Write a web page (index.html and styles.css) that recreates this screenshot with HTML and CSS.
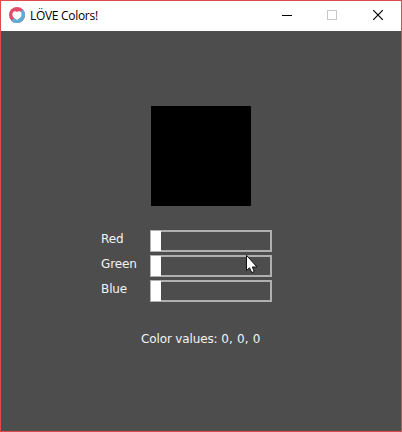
FILE: index.html
```html
<!DOCTYPE html>
<html lang="en">
<head>
<meta charset="utf-8">
<title>LÖVE Colors!</title>
<link rel="stylesheet" href="styles.css">
</head>
<body>
<div class="window">
  <header class="titlebar">
    <svg class="logo" width="16" height="16" viewBox="0 0 16 16">
      <circle cx="8" cy="8" r="8" fill="#e64a6b"/>
      <path d="M13.66 2.34A8 8 0 0 1 2.34 13.66Z" fill="#5cacd6"/>
      <path d="M8 13 4.4 10.2C2.8 8.4 3.2 4.2 5.8 4.2 6.9 4.2 7.6 4.5 8 5.2 8.4 4.5 9.1 4.2 10.2 4.2 12.8 4.2 13.2 8.4 11.6 10.2Z" fill="#fff"/>
    </svg>
    <span class="title">LÖVE Colors!</span>
    <div class="controls">
      <svg width="46" height="30" viewBox="0 0 46 30" shape-rendering="crispEdges"><path d="M18 14h10v1H18z" fill="#000"/></svg>
      <svg width="46" height="30" viewBox="0 0 46 30" shape-rendering="crispEdges"><rect x="17.5" y="9.5" width="9" height="9" fill="none" stroke="#c8c8c8"/></svg>
      <svg width="46" height="30" viewBox="0 0 46 30"><path d="M17.2 9.2 26.8 18.8M26.8 9.2 17.2 18.8" stroke="#000" stroke-width="1.2"/></svg>
    </div>
  </header>
  <main class="content">
    <div class="swatch"></div>
    <div class="sliders">
      <div class="row"><span class="label">Red</span><div class="track"><div class="handle"></div></div></div>
      <div class="row"><span class="label">Green</span><div class="track"><div class="handle"></div></div></div>
      <div class="row"><span class="label">Blue</span><div class="track"><div class="handle"></div></div></div>
    </div>
    <p class="values">Color values: <span class="numbers">0, 0, 0</span></p>
  </main>
  <svg class="cursor" width="13" height="20" viewBox="0 0 13 20">
    <path d="M1.5 1.3V16.5L4.5 13.8 6.8 18.6 9.3 17.5 7.3 13H12Z" fill="#fff" stroke="#111"/>
  </svg>
</div>
</body>
</html>
```

FILE: styles.css
```css
* {
  box-sizing: border-box;
}

body {
  margin: 0;
}

.window {
  position: relative;
  width: 402px;
  height: 432px;
  border: 1px solid #e04a4a;
  background: #4d4d4d;
  overflow: hidden;
}

.titlebar {
  display: flex;
  align-items: center;
  height: 30px;
  padding-left: 8px;
  background: #fff;
}

.logo {
  margin-top: -2px;
}

.title {
  margin-left: 5px;
  font: 12px/28px "Open Sans", "Noto Sans", sans-serif;
  letter-spacing: -0.3px;
  color: #000;
  white-space: nowrap;
}

.controls {
  display: flex;
  margin-left: auto;
  margin-right: -1px;
}

.content {
  padding-top: 75px;
  font: 12px/14px "DejaVu Sans", sans-serif;
  color: #f4f4f4;
}

.swatch {
  width: 100px;
  height: 100px;
  margin-left: 150px;
  background: #000;
}

.sliders {
  display: flex;
  flex-direction: column;
  gap: 3px;
  margin: 24px 0 0 100px;
}

.row {
  display: flex;
  height: 22px;
}

.label {
  width: 49px;
  padding-top: 2px;
  letter-spacing: -0.1px;
}

.track {
  width: 122px;
  height: 22px;
  border: 2px solid #b0b0b0;
}

.handle {
  width: 10px;
  height: 20px;
  margin: -1px 0 0 -1px;
  background: #fff;
}

.values {
  margin: 30px 0 0 140px;
  letter-spacing: -0.13px;
}

.numbers {
  letter-spacing: 0.15px;
}

.cursor {
  position: absolute;
  left: 244px;
  top: 253px;
}
```
